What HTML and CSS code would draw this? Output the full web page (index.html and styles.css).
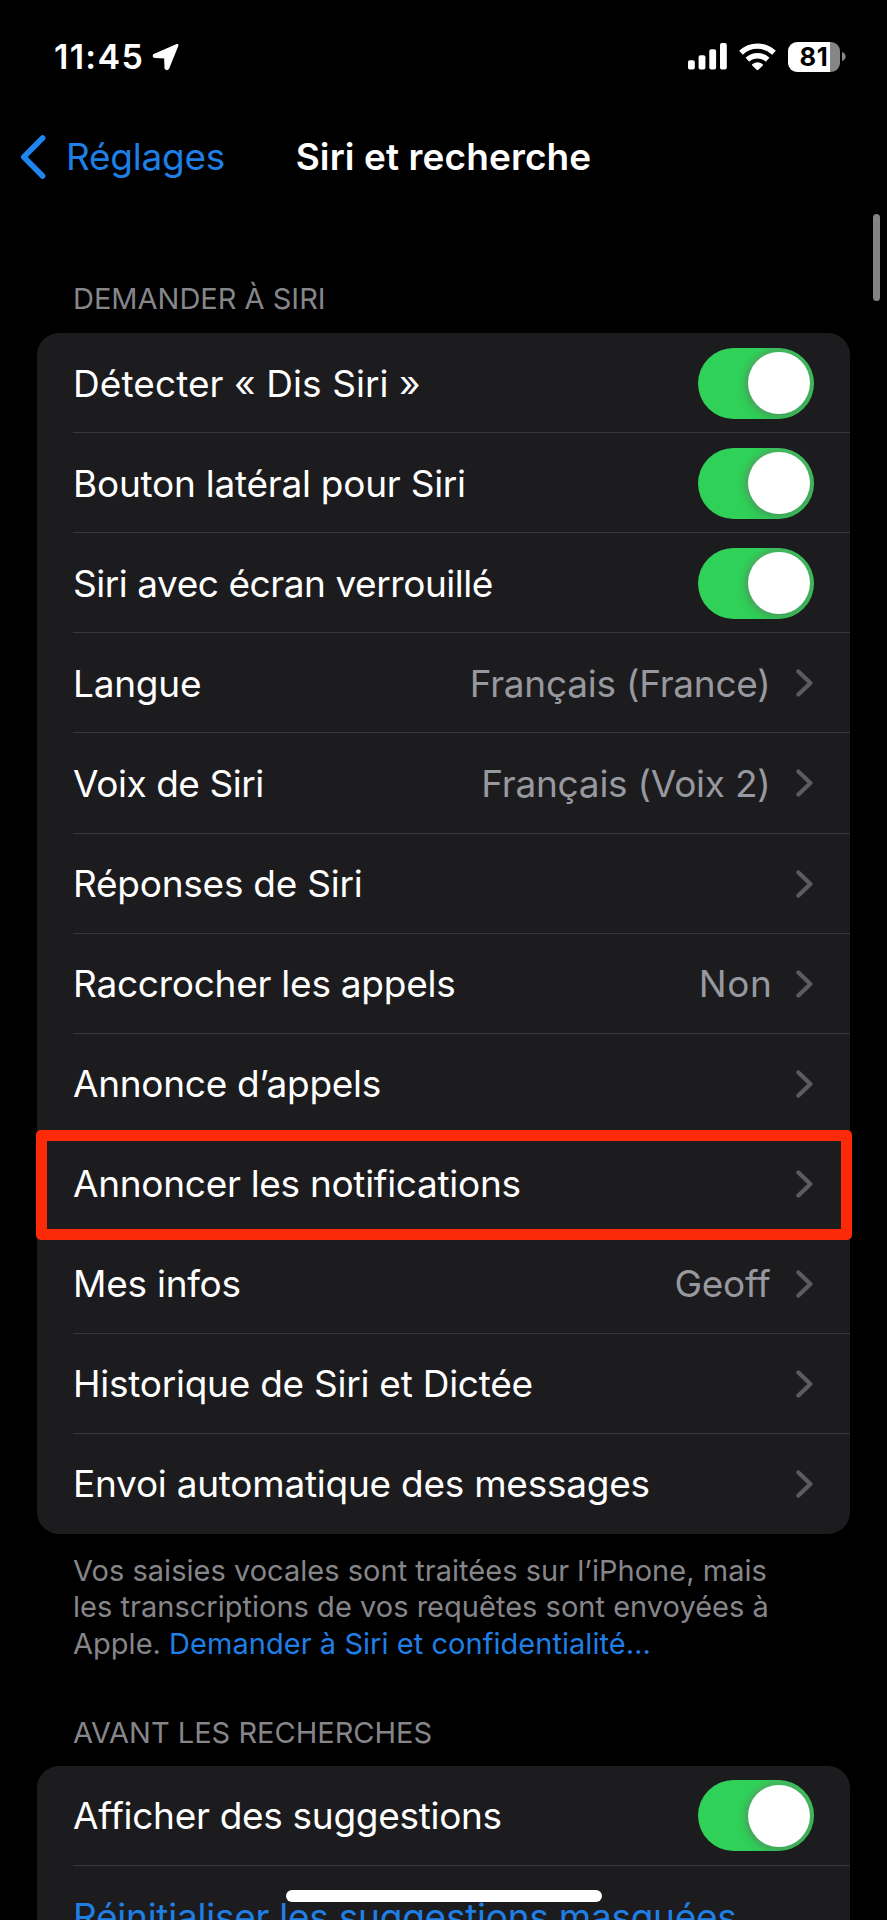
FILE: index.html
```html
<!DOCTYPE html>
<html lang="fr">
<head>
<meta charset="utf-8">
<title>Siri et recherche</title>
<link rel="stylesheet" href="styles.css">
</head>
<body>
<svg class="defs" aria-hidden="true">
  <symbol id="chevron" viewBox="0 0 17 28"><path d="M2.4 2.4 14.4 14 2.4 25.6" fill="none" stroke="currentColor" stroke-width="4.2" stroke-linecap="round" stroke-linejoin="round"/></symbol>
</svg>
<div class="screen">
  <header class="status">
    <div class="clock">
      <span class="time">11:45</span>
      <svg class="location" viewBox="0 0 28 28"><path d="M25.2 2.2 2.2 12.3Q1.6 13.6 2.8 13.8L13.4 14.1 13.8 25Q14.8 26.6 15.9 25.2Z" fill="#fff" stroke="#fff" stroke-width="2.6" stroke-linejoin="round"/></svg>
    </div>
    <div class="indicators">
      <svg class="signal" viewBox="0 0 39 27" fill="#fff"><rect x="0" y="17.3" width="6.8" height="9.2" rx="1.9"/><rect x="10.6" y="12.3" width="6.8" height="14.2" rx="1.9"/><rect x="21.3" y="6.2" width="6.8" height="20.3" rx="1.9"/><rect x="32" y="0" width="6.8" height="26.5" rx="1.9"/></svg>
      <svg class="wifi" viewBox="0 0 37 28"><g fill="none" stroke="#fff" stroke-width="5.4"><path d="M2 9.8A23.7 23.7 0 0 1 35 9.8"/><path d="M8.4 16.8A14.6 14.6 0 0 1 28.6 16.8"/></g><path d="M18.5 27.2Q18 27.2 17.6 26.8L13.2 22.4Q12.8 21.6 13.5 21.1Q18.5 17.5 23.5 21.1Q24.2 21.6 23.8 22.4L19.4 26.8Q19 27.2 18.5 27.2Z" fill="#fff"/></svg>
      <div class="battery"><div class="cell"><span class="charge">81</span></div><svg class="cap" viewBox="0 0 4 9"><path d="M0 0Q3.6 1.2 3.6 4.5T0 9Z" fill="#868686"/></svg></div>
    </div>
  </header>

  <nav class="navbar">
    <a class="back"><svg class="back-arrow" viewBox="0 0 26 44"><path d="M22.6 3 3.8 22 22.6 41" fill="none" stroke="currentColor" stroke-width="5.6" stroke-linecap="round" stroke-linejoin="round"/></svg><span>Réglages</span></a>
    <h1 class="title">Siri et recherche</h1>
  </nav>

  <main>
    <h2 class="heading">Demander à Siri</h2>
    <ul class="card">
      <li class="row"><span class="label wide">Détecter «&nbsp;Dis Siri&nbsp;»</span><span class="toggle"></span></li>
      <li class="row"><span class="label">Bouton latéral pour Siri</span><span class="toggle"></span></li>
      <li class="row"><span class="label tight">Siri avec écran verrouillé</span><span class="toggle"></span></li>
      <li class="row"><span class="label">Langue</span><span class="value">Français (France)</span><svg class="chevron"><use href="#chevron"/></svg></li>
      <li class="row"><span class="label tight">Voix de Siri</span><span class="value">Français (Voix 2)</span><svg class="chevron"><use href="#chevron"/></svg></li>
      <li class="row"><span class="label">Réponses de Siri</span><svg class="chevron"><use href="#chevron"/></svg></li>
      <li class="row"><span class="label">Raccrocher les appels</span><span class="value wide">Non</span><svg class="chevron"><use href="#chevron"/></svg></li>
      <li class="row"><span class="label snug">Annonce d’appels</span><svg class="chevron"><use href="#chevron"/></svg></li>
      <li class="row highlighted"><span class="label snug">Annoncer les notifications</span><svg class="chevron"><use href="#chevron"/></svg></li>
      <li class="row"><span class="label">Mes infos</span><span class="value">Geoff</span><svg class="chevron"><use href="#chevron"/></svg></li>
      <li class="row"><span class="label">Historique de Siri et Dictée</span><svg class="chevron"><use href="#chevron"/></svg></li>
      <li class="row"><span class="label">Envoi automatique des messages</span><svg class="chevron"><use href="#chevron"/></svg></li>
    </ul>
    <p class="note">Vos saisies vocales sont traitées sur l’iPhone, mais<br>les transcriptions de vos requêtes sont envoyées à<br>Apple. <a class="link">Demander à Siri et confidentialité…</a></p>

    <h2 class="heading second">Avant les recherches</h2>
    <ul class="card">
      <li class="row"><span class="label snug">Afficher des suggestions</span><span class="toggle"></span></li>
      <li class="row"><span class="label action">Réinitialiser les suggestions masquées</span></li>
    </ul>
  </main>
  <div class="scrollbar"></div>
  <div class="home-indicator"></div>
</div>
</body>
</html>
```
FILE: styles.css
```css
* { box-sizing: border-box; }

html, body { margin: 0; background: #000; }

body {
  height: 1920px;
  overflow: hidden;
  color: #fff;
  font-family: Inter, "Liberation Sans", sans-serif;
}

.defs { display: none; }

.screen {
  position: relative;
  width: 887px;
  height: 1920px;
  overflow: hidden;
}

svg { display: block; flex: none; }

/* Status bar */
.status {
  display: flex;
  justify-content: space-between;
  align-items: center;
  height: 113px;
  padding: 0 41px 0 54px;
}

.clock, .indicators, .battery { display: flex; align-items: center; }

.time {
  width: 98px;
  font-size: 34px;
  font-weight: 560;
  letter-spacing: 1.3px;
}

.location { width: 28px; height: 28px; }

.signal { width: 39px; height: 27px; margin-right: 12.5px; }

.wifi { width: 37px; height: 28px; margin-right: 12px; }

.battery { gap: 2px; }

.cell {
  width: 52px;
  height: 30px;
  border-radius: 9px;
  background: linear-gradient(90deg, #fff 42px, #868686 42px);
  text-align: center;
}

.charge {
  color: #000;
  font-size: 25.5px;
  font-weight: 700;
  line-height: 30px;
  letter-spacing: 0.8px;
}

.cap { width: 4px; height: 9px; }

/* Navigation bar */
.navbar {
  display: grid;
  grid-template-columns: 1fr auto 1fr;
  align-items: center;
  height: 87px;
  padding: 0 20px;
  font-size: 37px;
}

.back {
  display: flex;
  align-items: center;
  gap: 20px;
  color: #1f7fe5;
  letter-spacing: -0.25px;
}

.back-arrow { width: 26px; height: 44px; color: #1f85f0; }

.title {
  margin: 0;
  font-size: 37px;
  font-weight: 600;
  letter-spacing: 0.1px;
}

/* Grouped lists */
.heading {
  height: 133.2px;
  margin: 0;
  padding: 80px 0 0 73px;
  color: #86868a;
  font-size: 29px;
  font-weight: 400;
  line-height: 38px;
  text-transform: uppercase;
}

.card {
  margin: 0 37px 0 36.5px;
  padding: 0;
  list-style: none;
  border-radius: 22px;
  background: #1c1c1e;
}

.row {
  position: relative;
  display: flex;
  align-items: center;
  height: 100.07px;
  padding: 0 37px 0 36.5px;
  font-size: 37px;
  letter-spacing: -0.25px;
}

.row:not(:last-child)::after {
  content: "";
  position: absolute;
  right: 0;
  bottom: 0;
  left: 36px;
  height: 1px;
  background: #37373a;
}

.label { flex: 1; white-space: nowrap; }

.snug { letter-spacing: -0.3px; }

.tight { letter-spacing: -0.45px; }

.label.wide { letter-spacing: 0.08px; }

.value { margin-right: 25.5px; color: #98989f; white-space: nowrap; }

.value.wide { letter-spacing: 0.6px; margin-right: 23.5px; }

.chevron { width: 17px; height: 28px; color: #5c5c60; }

.toggle {
  display: flex;
  justify-content: flex-end;
  width: 116.5px;
  height: 71px;
  margin-right: -1.2px;
  padding: 4.5px;
  border-radius: 36px;
  background: #30d158;
  overflow: hidden;
}

.toggle::before {
  content: "";
  width: 62px;
  height: 62px;
  border-radius: 50%;
  background: #fff;
  box-shadow: 0 4px 14px rgba(0, 0, 0, 0.12), 0 0 4px 4px rgba(120, 130, 120, 0.35);
}

.highlighted::before {
  content: "";
  position: absolute;
  z-index: 1;
  top: -4px;
  right: -1.5px;
  bottom: -6.5px;
  left: -1px;
  border: 11.5px solid #fc2a08;
  border-radius: 5px;
}

.note {
  margin: 0;
  padding: 19px 0 0 73px;
  color: #86868a;
  font-size: 29px;
  line-height: 36.5px;
  letter-spacing: 0.02px;
  white-space: nowrap;
}

.link { color: #1f7fe5; letter-spacing: 0.04px; }

.second { height: 103.5px; padding-top: 51.5px; }

.action { color: #1f7fe5; }

.scrollbar {
  position: absolute;
  top: 213.5px;
  right: 7px;
  width: 7px;
  height: 87px;
  border-radius: 4px;
  background: #838383;
}

.home-indicator {
  position: absolute;
  bottom: 18.5px;
  left: 286px;
  width: 316px;
  height: 11.5px;
  border-radius: 6px;
  background: #fff;
}
```
